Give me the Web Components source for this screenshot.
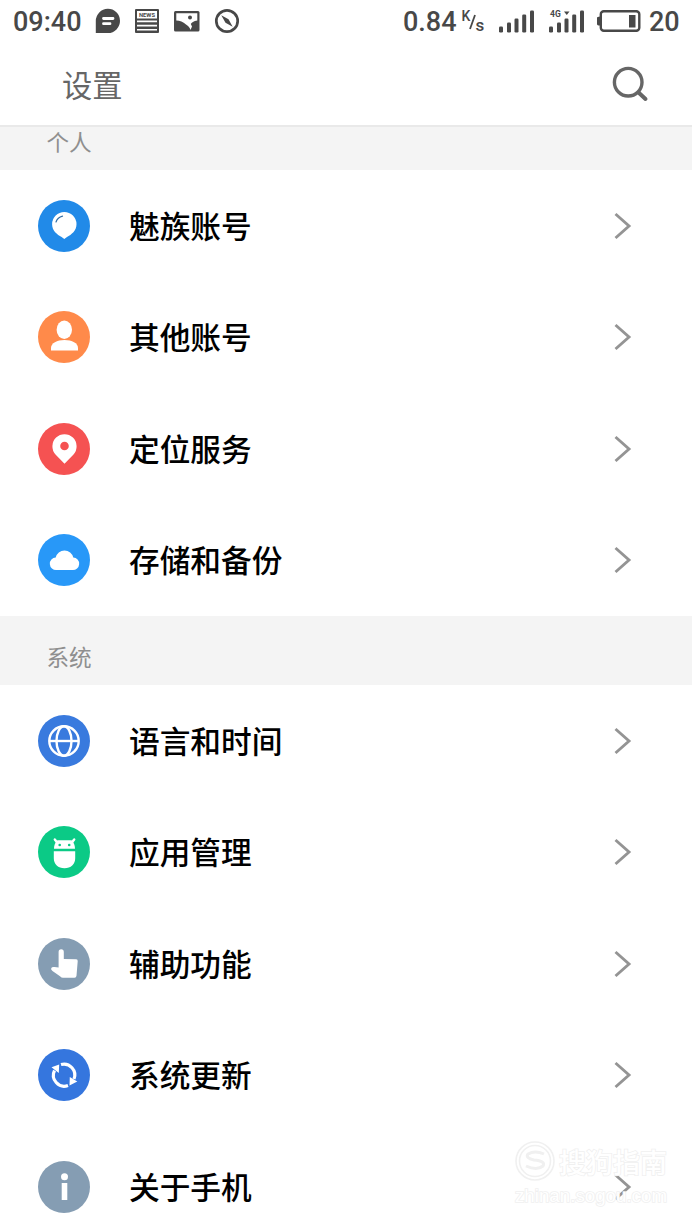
<!DOCTYPE html>
<html lang="zh-CN">
<head>
<meta charset="utf-8">
<title>设置</title>
<style>
html,body{margin:0;padding:0}
body{width:692px;height:1230px;overflow:hidden;background:#fff;font-family:"Noto Sans CJK SC",sans-serif}
</style>
</head>
<body>
<settings-screen></settings-screen>
<script>
const define = (name, html, setup) => customElements.define(name, class extends HTMLElement {
  constructor() {
    super();
    const t = document.createElement('template');
    t.innerHTML = html;
    this.attachShadow({ mode: 'open' }).append(t.content.cloneNode(true));
  }
  connectedCallback() { if (setup) setup(this, this.shadowRoot); }
});

define('status-bar', `
<style>
:host{display:flex;box-sizing:border-box;height:42px;padding:0 13px;justify-content:space-between;align-items:center;font:500 27px/42px Roboto,sans-serif;color:#484848}
.side{display:flex;align-items:center;height:42px}
svg{display:block;flex:none}
span{padding-top:2px}
.clock{width:68px;margin-right:14px;white-space:nowrap}
.rate{width:53px;margin-left:-1px;white-space:nowrap}
.unit{width:28px}
.level{width:30px}
</style>
<div class="side">
<span class="clock">09:40</span>
<svg width="26" height="26" viewBox="0 0 26 26"><path fill="#484848" d="M.800 25V13A12.100 12.100 0 1 1 13 25Z"/><path stroke="#fff" stroke-width="2.800" stroke-linecap="round" d="M8.500 10.500h9.500M8.500 15.700h6.500"/></svg>
<svg width="26" height="26" viewBox="0 0 26 26" style="margin-left:13px"><rect x="1" y="1" width="24" height="24" rx="1" fill="#484848"/><path fill="#fff" d="M3 3h20v7.500H3zM3 12.500h20v1.700H3zM3 16.700h20v1.700H3zM3 20.900h20v1.700H3z"/><text x="5" y="8.900" font-size="6" font-weight="700" textLength="16" lengthAdjust="spacingAndGlyphs" fill="#484848">NEWS</text></svg>
<svg width="28" height="26" viewBox="0 0 28 26" style="margin-left:13px"><rect x="1" y="3" width="25.500" height="20.500" rx="1.500" fill="#484848"/><path fill="#fff" d="M3.300 5.300h21v7.200c-3.500.5-6 2-6.500 3.500l1.200 2.500-1.500 3.500c-.5-2-2-4-4.500-5.500-3-2.500-6-4-9.700-4z"/><circle cx="17" cy="9.600" r="2" fill="#484848"/></svg>
<svg width="26" height="26" viewBox="0 0 26 26" style="margin-left:13px"><circle cx="13" cy="13" r="10.700" fill="none" stroke="#484848" stroke-width="2.700"/><path fill="#484848" d="M7.300 7.300l7.200 3.900 4.200 7.500-7.200-4z"/></svg>
</div>
<div class="side">
<span class="rate">0.84</span>
<svg class="unit" height="30" viewBox="0 0 28 30" fill="#484848" style="margin-left:5px"><text x="0.500" y="14.500" font-size="14">K</text><path stroke="#484848" stroke-width="1.800" d="M9 23l5-14"/><text x="14.500" y="25" font-size="17">s</text></svg>
<svg width="36" height="24" viewBox="0 0 36 24" fill="#484848" style="margin-left:10px"><rect x="0" y="17.500" width="4" height="6" rx="1.200"/><rect x="8" y="13.500" width="4" height="10" rx="1.200"/><rect x="15.500" y="9.500" width="4" height="14" rx="1.200"/><rect x="23.200" y="5.500" width="4" height="18" rx="1.200"/><rect x="31" y="1.500" width="4" height="22" rx="1.200"/></svg>
<svg width="36" height="24" viewBox="0 0 36 24" fill="#484848" style="margin-left:14px"><rect x="0" y="17.500" width="4" height="6" rx="1.200"/><rect x="8" y="13.500" width="4" height="10" rx="1.200"/><rect x="15.500" y="9.500" width="4" height="14" rx="1.200"/><rect x="23.200" y="5.500" width="4" height="18" rx="1.200"/><rect x="31" y="1.500" width="4" height="22" rx="1.200"/><text x="1" y="8" font-size="8.500" font-weight="700">4G</text><path d="M15 2.500h5.500l-2.750 3.500z"/></svg>
<svg width="44" height="24" viewBox="0 0 44 24" style="margin-left:12px"><rect x="3.800" y="2.300" width="38.500" height="19.500" rx="3" fill="none" stroke="#484848" stroke-width="2.400"/><path fill="#484848" d="M0 9q0-1.500 3-1.500v9q-3 0-3-1.500zM32 6h6.500v12.500H32z"/></svg>
<span class="level" style="margin-left:8px">20</span>
</div>`);

define('title-bar', `
<style>
:host{display:flex;box-sizing:border-box;height:85px;padding:0 43px 0 62px;justify-content:space-between;align-items:center;border-bottom:2px solid #e9e9e9;font-size:30.300px;line-height:44px;color:#666}
svg{display:block}
</style>
<slot></slot>
<svg width="38" height="38" viewBox="0 0 38 38" fill="none" stroke="#666" stroke-width="3.400" stroke-linecap="round"><circle cx="17.200" cy="17.200" r="13.800"/><path stroke-width="4" d="M27.800 27.800l6.700 6.200"/></svg>`);

define('section-head', `
<style>
:host{display:flex;box-sizing:border-box;align-items:center;height:69px;padding:12px 46.500px 0;background:#f4f4f4;color:#8f8f8f;font-size:22.600px;line-height:32px}
:host([clipped]){height:43px;padding-top:0;padding-bottom:13px}
</style><slot></slot>`);

const glyphs = {
  balloon: ['#218ae8', '<path fill="#fff" d="M26.300 12a12.200 12.200 0 0 1 12.200 12.200c0 6.500-5 10.300-9.500 12.800l-2.700 2-2.700-2c-4.500-2.500-9.500-6.300-9.500-12.800A12.200 12.200 0 0 1 26.300 12z"/><path fill="none" stroke="#2f6ca5" stroke-width="1.200" stroke-linecap="round" d="M18 22q1.500-4.500 6.500-5.800"/>'],
  person: ['#ff8a4a', '<ellipse cx="26.300" cy="18.800" rx="7.700" ry="9.200" fill="#fff"/><path fill="#fff" d="M13 39.500V37c0-5 6-8 13.500-8S40 32 40 37v2.500z"/>'],
  pin: ['#f55252', '<path fill="#fff" fill-rule="evenodd" d="M26.500 40.700l-9-9.300a12.100 12.100 0 1 1 18 0zM26.500 18.700a4.300 4.300 0 1 0 0 8.600 4.300 4.300 0 0 0 0-8.600z"/>'],
  cloud: ['#2898f8', '<path fill="#fff" d="M18.500 36a6.200 6.200 0 0 1-.8-12.500 9 9 0 0 1 17.600 0A6.200 6.200 0 0 1 34.500 36z"/>'],
  globe: ['#397ade', '<g fill="none" stroke="#fff" stroke-width="2.400"><circle cx="26" cy="26" r="14.700"/><ellipse cx="26" cy="26" rx="7.500" ry="14.700"/><path d="M11 26h30"/></g>'],
  robot: ['#0bca86', '<path fill="#fff" d="M16 22.700c0-3.500 1.200-6.200 3.500-8.500h14c2.300 2.300 3.500 5 3.500 8.500zM15.800 25.300h21.400v7c0 6-4.300 10-10.700 10s-10.700-4-10.700-10z"/><path stroke="#fff" stroke-width="2.400" stroke-linecap="round" d="M16.800 13.500l2.700 3.500M36.200 13.500L33.500 17"/><circle cx="21.700" cy="19" r="1.300" fill="#0bca86"/><circle cx="31.200" cy="19" r="1.300" fill="#0bca86"/>'],
  hand: ['#859db3', '<path fill="#fff" d="M20.600 14q0-2.700 2.600-2.700t2.600 2.700v7l12.400.3q1.700.2 1.500 1.900l-1.200 14.500q-.2 2-2 2H25q-1.500 0-3-1.500l-7.500-5.300q-2-1-1.200-2.800 1-1.500 3.200-1l4.100.4z"/>'],
  update: ['#3576de', '<g fill="none" stroke="#fff" stroke-width="3.200"><path d="M23 15.500a10.900 10.900 0 0 1 13 14.500M30 36.500a10.900 10.900 0 0 1-13.500-15"/></g><path fill="#fff" d="M13.500 18.300l7.700-2.800-.4 8.500zM39.300 32.500l-7.800 4 .3-8.500z"/>'],
  info: ['#859db3', '<circle cx="26.500" cy="15.700" r="3.500" fill="#fff"/><path fill="#fff" d="M23.700 22h5.600v17h-5.600z"/>']
};
define('round-icon', `<style>:host{display:block;width:52px;height:52px;flex:none}svg{display:block}</style><svg width="52" height="52" viewBox="0 0 52 52"></svg>`, (el, root) => {
  const entry = glyphs[el.getAttribute('name')];
  if (entry) root.querySelector('svg').innerHTML = '<circle cx="26" cy="26" r="26" fill="' + entry[0] + '"/>' + entry[1];
});

define('setting-row', `
<style>
:host{display:flex;box-sizing:border-box;align-items:center;height:111.500px;padding:0 60px 0 38.300px;color:#000;font-size:30.700px;font-weight:500;line-height:44px}
.label{flex:1;padding:0 0 2px 38.700px}
svg{display:block}
</style>
<div class="icon"></div><span class="label"><slot></slot></span>
<svg width="18" height="28" viewBox="0 0 18 28"><path fill="none" stroke="#949494" stroke-width="2.900" d="M1.500 2L15 14 1.500 26"/></svg>`, (el, root) => {
  root.querySelector('.icon').innerHTML = '<round-icon name="' + el.getAttribute('icon') + '"></round-icon>';
});

define('water-mark', `
<style>
:host{display:block;position:absolute;left:509px;top:1138px;width:170px;height:74px}
svg{display:block}
</style>
<svg width="170" height="74" viewBox="-4 0 170 74" fill="#fff" stroke="#f0f0f0" stroke-width="1.600" paint-order="stroke"><circle cx="22" cy="23" r="19" fill="none"/><circle cx="22" cy="23" r="15.500" fill="none"/><path fill="none" stroke-width="3" d="M31 16q-9-4-16 0-3 4 6 6 12 1 9 6-6 5-17 0"/>
<text x="46" y="35" font-size="27" font-weight="500" font-family="Noto Sans CJK SC,sans-serif">搜狗指南</text>
<text x="2" y="64" font-size="18" textLength="152" lengthAdjust="spacingAndGlyphs" font-family="Liberation Sans,sans-serif">zhinan.sogou.com</text></svg>`);

define('settings-screen', `
<style>:host{display:block;position:relative;width:692px;height:1230px;overflow:hidden;background:#fff}</style>
<status-bar></status-bar>
<title-bar>设置</title-bar>
<section-head clipped>个人</section-head>
<setting-row icon="balloon">魅族账号</setting-row>
<setting-row icon="person">其他账号</setting-row>
<setting-row icon="pin">定位服务</setting-row>
<setting-row icon="cloud">存储和备份</setting-row>
<section-head>系统</section-head>
<setting-row icon="globe">语言和时间</setting-row>
<setting-row icon="robot">应用管理</setting-row>
<setting-row icon="hand">辅助功能</setting-row>
<setting-row icon="update">系统更新</setting-row>
<setting-row icon="info">关于手机</setting-row>
<water-mark></water-mark>`);
</script>
</body>
</html>
